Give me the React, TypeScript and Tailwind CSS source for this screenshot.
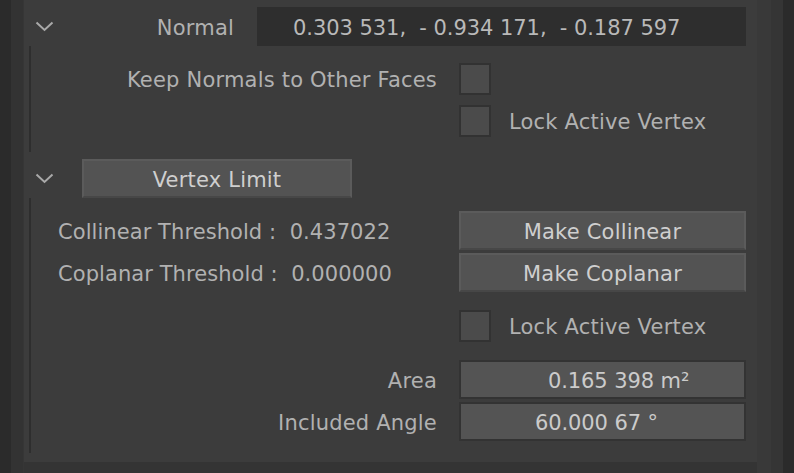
import React from 'react';

const font = { fontFamily: '"DejaVu Sans", "Liberation Sans", sans-serif' };

function Chevron() {
  return (
    <svg width="19" height="11" viewBox="0 0 19 11" className="shrink-0">
      <polyline points="1.5,1.5 9.5,9 17.5,1.5" fill="none" stroke="#a9a9a9" strokeWidth="2" />
    </svg>
  );
}

function Checkbox() {
  return <div className="w-[32px] h-[32px] shrink-0 border-2 border-[#323232] bg-[#4b4b4b]" />;
}

function Button({ label, className = '' }: { label: string; className?: string }) {
  return (
    <div
      className={`h-[39px] flex items-center justify-center pt-[3px] bg-[#535353] border-2 border-[#5b5b5b] border-b-[#474747] text-[#cfcfcf] ${className}`}
    >
      {label}
    </div>
  );
}

function Field({ value, pad }: { value: string; pad: string }) {
  return (
    <div className={`w-[287px] h-[39px] flex items-center pt-[3px] bg-[#545454] border-2 border-[#333333] text-[#cbcbcb] tracking-[-0.1px] ${pad}`}>
      {value}
    </div>
  );
}

export default function App() {
  return (
    <div className="w-[794px] h-[473px] flex bg-[#2a2a2a] overflow-hidden text-[21px] leading-none tracking-[0.2px]" style={font}>
      <div className="w-[11px] bg-[#2b2b2b]" />
      <div className="w-[12px] bg-[#333333]" />
      <div className="w-[1px] bg-[#363636]" />

      <div className="w-[733px] flex flex-col">
        <div className="h-[462px] bg-[#3c3c3c] flex flex-col text-[#b1b1b1]">
          {/* Normal */}
          <div className="flex items-center h-[39px] mt-[7px] pl-[11px]">
            <Chevron />
            <div className="w-[180px] text-right pt-[3px]">Normal</div>
            <div className="ml-[23px] w-[489px] h-[39px] flex items-center pt-[3px] pl-[36px] bg-[#2e2e2e] text-[#b9b9b9] whitespace-pre tracking-[-0.05px]">
              0.303 531,  - 0.934 171,  - 0.187 597
            </div>
          </div>
          <div className="ml-[5px] border-l-2 border-[#2e2e2e] flex flex-col gap-[10px] pt-[17px] pb-[15px]">
            <div className="flex items-center">
              <div className="w-[406px] text-right pt-[3px]">Keep Normals to Other Faces</div>
              <div className="ml-[22px]"><Checkbox /></div>
            </div>
            <div className="flex items-center">
              <div className="w-[406px]" />
              <div className="ml-[22px]"><Checkbox /></div>
              <div className="ml-[18px] pt-[3px]">Lock Active Vertex</div>
            </div>
          </div>

          {/* Vertex Limit */}
          <div className="flex items-center h-[39px] mt-[7px] pl-[11px]">
            <Chevron />
            <Button label="Vertex Limit" className="ml-[28px] w-[270px]" />
          </div>
          <div className="ml-[5px] border-l-2 border-[#2e2e2e] flex flex-col pt-[13px] pb-[12px]">
            <div className="flex items-center">
              <div className="w-[406px] pl-[27px] pt-[3px] whitespace-pre tracking-[0.07px]">Collinear Threshold :  0.437022</div>
              <Button label="Make Collinear" className="ml-[22px] w-[287px]" />
            </div>
            <div className="flex items-center mt-[3px]">
              <div className="w-[406px] pl-[27px] pt-[3px] whitespace-pre tracking-[0.07px]">Coplanar Threshold :  0.000000</div>
              <Button label="Make Coplanar" className="ml-[22px] w-[287px]" />
            </div>
            <div className="flex items-center mt-[18px]">
              <div className="w-[406px]" />
              <div className="ml-[22px]"><Checkbox /></div>
              <div className="ml-[18px] pt-[3px]">Lock Active Vertex</div>
            </div>
            <div className="flex items-center mt-[18px]">
              <div className="w-[406px] text-right pt-[3px]">Area</div>
              <div className="ml-[22px]"><Field value="0.165 398 m²" pad="pl-[87px]" /></div>
            </div>
            <div className="flex items-center mt-[3px]">
              <div className="w-[406px] text-right pt-[3px]">Included Angle</div>
              <div className="ml-[22px]"><Field value="60.000 67 °" pad="pl-[74px]" /></div>
            </div>
          </div>
        </div>
        <div className="flex-1 bg-[#343434]" />
      </div>

      <div className="w-[14px] bg-[#393939]" />
      <div className="w-[12px] bg-[#353535]" />
      <div className="flex-1 bg-[#2b2b2b]" />
    </div>
  );
}
